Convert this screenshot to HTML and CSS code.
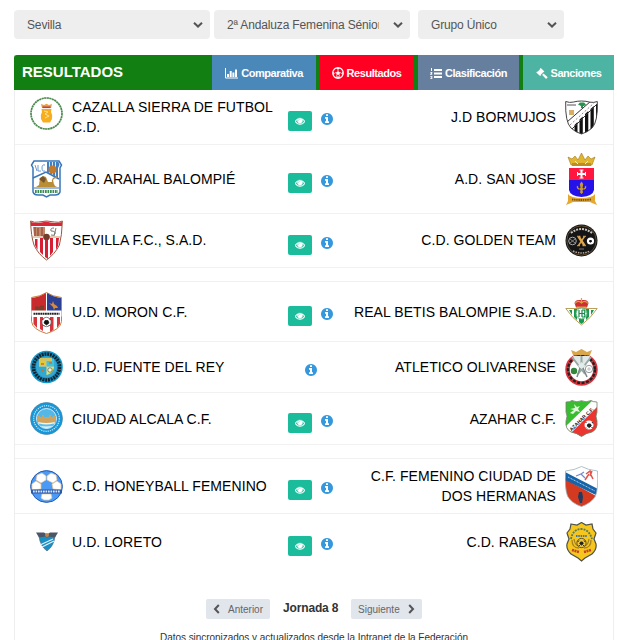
FILE: index.html
```
<!DOCTYPE html>
<html lang="es">
<head>
  <meta charset="UTF-8" />
  <title>Resultados</title>
  <meta name="viewport" content="width=device-width, initial-scale=1.0" />
  <link rel="stylesheet" href="styles.css">
</head>
<body>

<!-- shared icons -->
<svg class="defs" width="0" height="0">
  <symbol id="eye" viewBox="0 0 1792 1792"><path d="M1664 960q-152-236-381-353 61 104 61 225 0 185-131.500 316.500t-316.500 131.500-316.500-131.500-131.500-316.500q0-121 61-225-229 117-381 353 133 205 333.500 326.500t434.500 121.500 434.500-121.500 333.500-326.500zm-720-384q0-20-14-34t-34-14q-125 0-214.500 89.500t-89.500 214.500q0 20 14 34t34 14 34-14 14-34q0-86 61-147t147-61q20 0 34-14t14-34zm848 384q0 34-20 69-140 230-376.500 368.500t-499.500 138.500-499.500-139-376.500-368q-20-35-20-69t20-69q140-229 376.500-368t499.500-139 499.500 139 376.500 368q20 35 20 69z"/></symbol>
  <symbol id="info" viewBox="0 0 1792 1792"><path d="M1152 1376v-160q0-14-9-23t-23-9h-96v-512q0-14-9-23t-23-9h-320q-14 0-23 9t-9 23v160q0 14 9 23t23 9h96v320h-96q-14 0-23 9t-9 23v160q0 14 9 23t23 9h448q14 0 23-9t9-23zm-128-896v-160q0-14-9-23t-23-9h-192q-14 0-23 9t-9 23v160q0 14 9 23t23 9h192q14 0 23-9t9-23zm640 416q0 209-103 385.500t-279.500 279.500-385.500 103-385.500-103-279.500-279.500-103-385.500 103-385.500 279.500-279.500 385.500-103 385.500 103 279.500 279.500 103 385.500z"/></symbol>
  <symbol id="down" viewBox="0 0 10 8"><path d="M1 1.700l4 3.800 4-3.800" fill="none" stroke="#555" stroke-width="2"/></symbol>
</svg>

<div class="filters">
  <div class="select"><span>Sevilla</span><svg><use href="#down"/></svg></div>
  <div class="select"><span>2ª Andaluza Femenina Sénior</span><svg><use href="#down"/></svg></div>
  <div class="select short"><span>Grupo Único</span><svg><use href="#down"/></svg></div>
</div>

<div class="panel">
  <header>
    <h1>RESULTADOS</h1>
    <nav>
      <a class="tab blue">
        <svg width="13" height="11" viewBox="0 0 13 11"><path d="M.5 0v10H13" fill="none" stroke="#fff"/><path d="M2 6h2v3H2zM4.700 3h2v6h-2zM7.400 4.500h2V9h-2zM10 1.500h2V9h-2z" fill="#fff"/></svg>
        <span>Comparativa</span>
      </a>
      <a class="tab red">
        <svg width="12" height="12" viewBox="0 0 12 12"><circle cx="6" cy="6" r="5.300" fill="none" stroke="#fff" stroke-width="1.200"/><path d="M6 3.900l2 1.500-.7 2.300H4.700L4 5.400z" fill="#fff"/><path d="M3.600 1L6 2.400 8.400 1zM.8 4.300l1.600 2L1.700 9zM11.200 4.300l-1.600 2 .7 2.700zM4 11l.4-1.600h3.200L8 11z" fill="#fff"/><path d="M6 2v2M2.400 6.300L4 5.500M9.600 6.300L8 5.500M4.500 9.400l.4-1.700M7.500 9.400l-.4-1.700" stroke="#fff" stroke-width=".7"/></svg>
        <span>Resultados</span>
      </a>
      <a class="tab slate">
        <svg width="12" height="11" viewBox="0 0 12 11"><path d="M4 1h8v2H4zM4 4.500h8v2H4zM4 8h8v2H4zM1 0h1v3H1zM.3 4h2v1.200l-1 1.200h1V7H.3V6l1-1.200h-1zM.3 8h2v3h-2v-.7h1.200V10H.8v-.6h.7v-.7H.3z" fill="#fff"/></svg>
        <span>Clasificación</span>
      </a>
      <a class="tab teal">
        <svg width="12" height="11" viewBox="0 0 12 11"><path d="M4.800 0l3.600 3.500-.9.800-.3-.1L6 5.400l.9.800.7-.6 4.100 3.600-1.600 1.800-3.900-4 .5-.6-.7-.8L4.800 6.800l.1.400-.8.800L.3 4.400l.8-.8.500.1L4 1.200 3.900.8z" fill="#fff"/></svg>
        <span>Sanciones</span>
      </a>
    </nav>
  </header>

  <!-- Cazalla - Bormujos -->
  <div class="match h55">
    <svg class="crest up" width="33" height="33" viewBox="0 0 33 33">
      <circle cx="16.500" cy="16.500" r="15.500" fill="#fff" stroke="#4a8a4d" stroke-width="1.700" stroke-dasharray="2.200 .4"/>
      <path d="M11 7l3 1 2.500-1.300L19 8l3-1-1 4h-9z" fill="#e8a33c"/><path d="M12.500 9.500h8v1.600h-8z" fill="#c33a52"/>
      <path d="M11.500 12h10l-.5 3q2 3 1 7l-2 3.500h-7L11 22q-1-4 1-7z" fill="#f6ae1e"/><path d="M14 14l4 1-3 2 4 2-4 2" fill="none" stroke="#fbe49a"/>
    </svg>
    <div class="name">CAZALLA SIERRA DE FUTBOL C.D.</div>
    <div class="actions"><a class="view"><svg><use href="#eye"/></svg></a><svg class="info"><use href="#info"/></svg></div>
    <div class="name away">J.D BORMUJOS</div>
    <svg class="crest" width="33" height="35" viewBox="0 0 33 35">
      <clipPath id="bor"><path d="M.7 1.500q4 1.500 7.500.6Q12 1 16.500 1t8.500 1.200q4 .7 7.300-.7Q33 22 27 28q-4 4-10.500 6Q10 32 6 28 0 22 .7 1.500z"/></clipPath>
      <g clip-path="url(#bor)"><path d="M0 0h33v35H0z" fill="#fff"/><path d="M9.500 25l3-3v13h-3zM14.500 19.500l3.300-3V35h-3.300zM20 14l3.300-3v24H20zM25.500 9l3.300-3v29h-3.300zM31 4h2v23h-2z" fill="#111"/><path d="M2 22L26 1M7 29L32 4" fill="none" stroke="#333"/><path d="M5 25L29 3" stroke="#888" stroke-dasharray="2 2"/><path d="M4 10h5v5H4z" fill="#d6ae66"/><path d="M2 5h9" stroke="#555"/><path d="M13 4.500l2-2h4l2 2-2 1.500h-1v2h-2V6z" fill="#26924e"/></g>
      <path d="M.7 1.500q4 1.500 7.500.6Q12 1 16.500 1t8.500 1.200q4 .7 7.300-.7Q33 22 27 28q-4 4-10.500 6Q10 32 6 28 0 22 .7 1.500z" fill="none" stroke="#444"/>
    </svg>
  </div>

  <!-- Arahal - San Jose -->
  <div class="match h69">
    <svg class="crest" width="33" height="38" viewBox="0 0 33 38">
      <path d="M4 1h25l2.500 4-1.500 3v24q-1 3-5 3h-5l-3.500 2-3.500-2H8q-4 0-5-3V8L1.500 5z" fill="#fff" stroke="#3976b8" stroke-width="1.500"/>
      <path d="M17 2h11.500l1 3-1.500 3v10l-11-6z" fill="#3e7fc5"/><path d="M19.500 2v11M22.500 2v13M25.500 2v14" stroke="#d8e8f7"/><circle cx="22.500" cy="9.500" r="4" fill="#c47a2c"/>
      <path d="M5 5l2 6M8 5v6h3M15 5q-3-1-3 3t3 3" stroke="#6a9bd1" fill="none"/><path d="M3 18l13-6 13 7" fill="none" stroke="#3976b8" stroke-width="1.500"/>
      <path d="M6 27l3-2 1-7q3-3 6-1l2 5h5l2 4 2 1H6z" fill="#b88d36"/><path d="M9 19l4-3 3 3-2 4z" fill="#77542a"/><path d="M23 23q-2-5 4-6" fill="none" stroke="#b88d36" stroke-width="1.300"/><path d="M4 28h25" stroke="#3976b8"/><path d="M5 31.500h23" stroke="#3d8c50" stroke-width="3" stroke-dasharray="1.700 .8"/>
    </svg>
    <div class="name">C.D. ARAHAL BALOMPIÉ</div>
    <div class="actions"><a class="view"><svg><use href="#eye"/></svg></a><svg class="info"><use href="#info"/></svg></div>
    <div class="name away">A.D. SAN JOSE</div>
    <svg class="crest" width="33" height="53" viewBox="0 0 33 53">
      <path d="M6 12L3 4l4 2 3-3 3 4 3.500-7L20 7l3-4 3 3 4-2-3 8z" fill="#e2b52e" stroke="#9f781a" stroke-width=".6"/><path d="M7 10h19v3H7z" fill="#bd8d24"/><path d="M10 8l3 3M23 8l-3 3" stroke="#fff1a0"/>
      <path d="M4 15h25v12H4z" fill="#ff173f"/><path d="M4 27h25v10q-1 6-12.500 7Q5 43 4 37z" fill="#2512e8"/>
      <path d="M16.500 17v8M12.500 21h8" stroke="#fff" stroke-width="2"/><path d="M14.500 17h4M14.500 25h4M12.500 19v4M20.500 19v4" stroke="#fff"/>
      <path d="M16.500 28.500l1.700 2.500-.7 4h1v2h-1l.5 2.500-1.500 1.500-1.500-1.500.5-2.500h-1v-2h1l-.7-4z" fill="#c9982f"/><path d="M14 36q-2-.5-1.500-3M19 36q2-.5 1.500-3" fill="none" stroke="#c9982f" stroke-width="1.300"/>
      <path d="M3 41q1 2 5 3 8.500 2 17 0 4-1 5-3v7l2 4-5-2-2-1H8l-2 1-5 2 2-4z" fill="#e4a92e"/><path d="M7 46.500q9 1 19 0" fill="none" stroke="#78521e" stroke-width="1.800" stroke-dasharray="1.500 .7"/>
    </svg>
  </div>

  <!-- Sevilla - Golden Team -->
  <div class="match h54 raise">
    <svg class="crest" width="33" height="41" viewBox="0 0 33 41">
      <path d="M.6 1q4 2 8 1l8-1 8 1q4 1 7.800-1-.5 15-3 24Q25 34 16.500 40 8 34 4 25 1 16 .6 1z" fill="#fff" stroke="#9b5740"/>
      <path d="M1 2q7 2 15-.5Q24 4 32 2v4H1z" fill="#d92637"/><path d="M3 7h12v9H4z" fill="#c18a66"/><path d="M5 7v9M8 8v8M12 7v9" stroke="#8e3632"/><path d="M24 8q-4 0-3 3 5 0 4 3-1 2-4 1M26 8l-2 8" fill="none" stroke="#777"/>
      <path d="M5 19h2.500v11L5 25zM10 18h3v17l-3-3zM15 19h3v20l-3-2zM20 18h3v14l-3 4zM26 18h3l-1 8-2 4z" fill="#d71e35"/><path d="M3 17h12M18 17h12" stroke="#bd9c6d"/><circle cx="16.500" cy="17" r="3.300" fill="#713e2b"/>
    </svg>
    <div class="name">SEVILLA F.C., S.A.D.</div>
    <div class="actions"><a class="view"><svg><use href="#eye"/></svg></a><svg class="info"><use href="#info"/></svg></div>
    <div class="name away">C.D. GOLDEN TEAM</div>
    <svg class="crest" width="33" height="33" viewBox="0 0 33 33">
      <circle cx="16.500" cy="16.500" r="16" fill="#151515"/><circle cx="16.500" cy="16.500" r="14.700" fill="none" stroke="#80643b" stroke-width=".7"/>
      <path d="M6 9q10-8 21 0" fill="none" stroke="#c9c4bd" stroke-width="2" stroke-dasharray="2 1"/><path d="M8 27q9 4 17 0" fill="none" stroke="#b9aaa0" stroke-width="1.500" stroke-dasharray="1.500 1"/>
      <circle cx="7.500" cy="17" r="3.800" fill="none" stroke="#aaa"/><path d="M5 15l5 4M10 15l-5 4" stroke="#aaa" stroke-width=".7"/><circle cx="25.500" cy="17" r="3.600" fill="#fff"/><path d="M24.500 16h2l.6 1.500-1.600 1.300-1.600-1.300z" fill="#111"/>
      <path d="M13.500 12.500l6 9" stroke="#dca54d" stroke-width="2.400"/><path d="M19.500 12.500l-6 9" stroke="#dca54d" stroke-width="1.400"/><path d="M12 12.300h3.500M18 12.300h3M12 21.700h3M17.500 21.700H21" stroke="#dca54d"/><path d="M14 25h5" stroke="#777"/>
    </svg>
  </div>

  <div class="spacer"></div>

  <!-- Moron - Betis -->
  <div class="match h60">
    <svg class="crest down" width="33" height="42" viewBox="0 0 33 42">
      <path d="M16.500.5q6 4 15 5v24q-1 8-15 12-14-4-15-12v-24q9-1 15-5z" fill="#fff" stroke="#c9823e"/>
      <path d="M2 6q8-1 14-5v18H2z" fill="#c92a2e"/><path d="M17 1q6 4 14 5v13H17z" fill="#2b3f93"/><path d="M5 15l2-1 2 1 2-2 3 1v5H5z" fill="#843c2a"/><path d="M19 11l3 1 1-3 1 3 3 2 1 2h-3l-1 2-1-3z" fill="#d58a3f"/>
      <path d="M3.500 25h3.500v11l-3.500-4zM10 25h3v14l-3-2zM20 25h3.500v13L20 40zM27 25h3v7l-3 4z" fill="#d6333e"/><path d="M1.500 18.500h30v6h-30z" fill="#fff"/><path d="M3.500 21.700h26" stroke="#222" stroke-width="2" stroke-dasharray="1.800 .5"/><circle cx="16.500" cy="30" r="4.700" fill="#fff" stroke="#555" stroke-width=".7"/><path d="M15 28.500h3l1 2.500-2.500 2-2.500-2zM12.500 28l1.500-1.500M19 26.500l1.500 1.500M13.500 33l1 1M18.500 34l1-1" fill="#111" stroke="#111" stroke-width=".7"/>
    </svg>
    <div class="name">U.D. MORON C.F.</div>
    <div class="actions"><a class="view"><svg><use href="#eye"/></svg></a><svg class="info"><use href="#info"/></svg></div>
    <div class="name away">REAL BETIS BALOMPIE S.A.D.</div>
    <svg class="crest" width="33" height="28" viewBox="0 0 33 28">
      <path d="M.8 10.500h31.400Q26 20 16.500 27 7 20 .8 10.500z" fill="#fff" stroke="#bba058"/>
      <path d="M4 12h3v5zM9 11h3v11l-3-3zM14 11h5v13l-2.500 2-2.500-2zM21 11h3v8l-3 3zM26 12h3l-3 5z" fill="#169a53"/>
      <circle cx="16.500" cy="15.500" r="5.500" fill="#fff" stroke="#57ac73"/><path d="M14 12v7M17 12v7M14 15.500h6M17 12h2q2 2 0 3.500 2 2 0 3.500h-2" fill="none" stroke="#168b4c" stroke-width="1.200"/>
      <path d="M11 9.500L9.500 5q1-3 4-3h6q3 0 4 3L22 9.500z" fill="#d02d36"/><path d="M10 5.500q3-4 6.500-.5 3.500-3.500 6.500.5M11.500 9h10M16.500 0v5" fill="none" stroke="#d7a83d" stroke-width="1.200"/>
    </svg>
  </div>

  <!-- Fuente del Rey - Olivarense -->
  <div class="match h51">
    <svg class="crest" width="33" height="34" viewBox="0 0 33 34">
      <circle cx="16.500" cy="17" r="16.300" fill="#1199cf"/><circle cx="16.500" cy="17" r="13" fill="none" stroke="#14242e" stroke-width="3.600" stroke-dasharray="2 .8"/><circle cx="16.500" cy="17" r="10.500" fill="#39a6d0"/>
      <path d="M9 9h7v7H9z" fill="#e3ca34"/><path d="M17 9h7v7h-7z" fill="#3cc5dc"/><path d="M9 17h7v8q-6-2-7-5z" fill="#2aabd2"/><path d="M17 17h7q0 5-7 8z" fill="#dde65b"/><path d="M10 8h12v3H10z" fill="#d8c25a"/><circle cx="20" cy="20" r="2.200" fill="#f1f1d9" stroke="#444" stroke-width=".6"/><path d="M16.500 9v16M9 16.500h15" stroke="#a6caa5" stroke-width=".8"/><path d="M11 14h3M11 20l3 1M19 13h3" stroke="#d66b2c" stroke-width="1.300"/>
    </svg>
    <div class="name">U.D. FUENTE DEL REY</div>
    <div class="actions solo"><svg class="info"><use href="#info"/></svg></div>
    <div class="name away">ATLETICO OLIVARENSE</div>
    <svg class="crest" width="33" height="37" viewBox="0 0 33 37">
      <circle cx="16.500" cy="20.500" r="14" fill="#fff" stroke="#d7353e" stroke-width="4.500"/><circle cx="16.500" cy="20.500" r="13.500" fill="none" stroke="#222" stroke-width="2.400" stroke-dasharray="3 1.500"/>
      <path d="M8 7h17l-1 5-7 6-8-6z" fill="#dfe8e7"/><path d="M8 6L6 1l5 2 5.500-3L22 3l5-2-2 5z" fill="#d9a64a"/>
      <path d="M7 8l13 17M26 8L13 25M16.500 7v8" stroke="#9aa8a4" stroke-width="2"/><path d="M15 19l-3 9M18 19l4 9" stroke="#7c8987" stroke-width="1.500"/><path d="M13 17l3.500-4 4 4-4 3z" fill="#e2eceb"/><circle cx="9" cy="22" r="3.200" fill="#31863c"/><circle cx="24" cy="20" r="3.700" fill="#fff" stroke="#999"/><path d="M22 20h4M24 18v4" stroke="#aaa" stroke-width=".7"/>
    </svg>
  </div>

  <!-- Alcala - Azahar -->
  <div class="match h52">
    <svg class="crest" width="33" height="33" viewBox="0 0 33 33">
      <circle cx="16.500" cy="16.500" r="16" fill="#1598db" stroke="#537c97" stroke-width=".7"/><circle cx="16.500" cy="16.500" r="12.800" fill="none" stroke="#bfe4f7" stroke-width="1.300" stroke-dasharray="1.200 1"/><circle cx="16.500" cy="16.500" r="10" fill="#55b7e5" stroke="#fff" stroke-width=".8"/>
      <path d="M7 14h3v1h2v-2h2v2h5v-2h2v2h2v-1h3v7H7z" fill="#d1a45d"/><path d="M8 20q8 2 17 0l-1 2q-3 4-7.500 4T9 22z" fill="#e9f5fb"/><path d="M9 22.500q7 2 15 0" stroke="#5ebeea" stroke-width="2" fill="none"/>
    </svg>
    <div class="name">CIUDAD ALCALA C.F.</div>
    <div class="actions"><a class="view"><svg><use href="#eye"/></svg></a><svg class="info"><use href="#info"/></svg></div>
    <div class="name away">AZAHAR C.F.</div>
    <svg class="crest" width="33" height="37" viewBox="0 0 33 37">
      <clipPath id="aza"><path d="M1 2q4 0 6-1.500Q12 3 16.500.7 21 3 26 .5 28 2 32 2v10q-2 4 0 9 1 8-5 11-6 1-10.500 4.500Q12 33 6 32q-6-3-5-11 2-5 0-9z"/></clipPath>
      <g clip-path="url(#aza)"><path d="M0 0h33v37H0z" fill="#37bd2f"/><path d="M33 4v33H0v-2z" fill="#ec352f"/><path d="M-1 28L29-1l6 5L5 34z" fill="#fff"/></g>
      <path d="M1 2q4 0 6-1.500Q12 3 16.500.7 21 3 26 .5 28 2 32 2v10q-2 4 0 9 1 8-5 11-6 1-10.500 4.500Q12 33 6 32q-6-3-5-11 2-5 0-9z" fill="none" stroke="#76806e" stroke-width=".8"/>
      <path d="M5 13l4-3-4-1 5-1-1-4 3 3 3-1-2 3 2 3-4-1-3 3z" fill="#e4f5de"/><circle cx="24" cy="25" r="4.500" fill="#fff"/><path d="M23 24h2.500l.7 2-2 1.500-2-1.500zM20.500 23l1-1M27 22l1 1.500M21 27.500l1 1M26.500 28l1-1" fill="#222" stroke="#222"/>
      <text x="0" y="0" transform="translate(6.500 31.500) rotate(-44)" class="sash">AZAHAR C.F.</text>
    </svg>
  </div>

  <div class="spacer"></div>

  <!-- Honeyball - Ciudad de Dos Hermanas -->
  <div class="match h55">
    <svg class="crest" width="33" height="33" viewBox="0 0 33 33">
      <circle cx="16.500" cy="16.500" r="15.900" fill="#4b9af5" stroke="#245bb2"/>
      <path d="M7 5l5-2 4 3v4l-5 3-5-3zM17 6l4-3 5 2 1 5-4 3-6-3zM2 14l4-3 5 3v5l-9 1zM22 14l5-3 4 3v6l-8-1zM12 24h9l1 4-3 2h-5l-3-2z" fill="#fff" stroke="#e5c49a" stroke-width=".7"/>
      <path d="M1 19.500h31v4H1z" fill="#285bad"/><path d="M3 21.500h27" stroke="#dce9ff" stroke-width="2" stroke-dasharray="1.700 .8"/>
    </svg>
    <div class="name">C.D. HONEYBALL FEMENINO</div>
    <div class="actions"><a class="view"><svg><use href="#eye"/></svg></a><svg class="info"><use href="#info"/></svg></div>
    <div class="name away">C.F. FEMENINO CIUDAD DE DOS HERMANAS</div>
    <svg class="crest" width="33" height="41" viewBox="0 0 33 41">
      <clipPath id="her"><path d="M.5 5Q10 4 16.500.5 23 4 32.500 5q1 17-2 25-4 7-14 10.500Q6 37 2.500 30-.5 22 .5 5z"/></clipPath>
      <g clip-path="url(#her)"><path d="M0 0h33v41H0z" fill="#fff"/><path d="M0 13l33 18v10H0z" fill="#d43a20"/><path d="M0 6l33 17v7L0 14z" fill="#1763a8"/><path d="M3 11l27 14" stroke="#bcd8ee" stroke-dasharray="1 .7"/></g>
      <path d="M.5 5Q10 4 16.500.5 23 4 32.500 5q1 17-2 25-4 7-14 10.500Q6 37 2.500 30-.5 22 .5 5z" fill="none" stroke="#9bb1bd" stroke-width=".8"/>
      <path d="M11 10l5-2 4 4M16 8l3-2" fill="none" stroke="#748bd1" stroke-width="1.300"/><path d="M21 8l4-3 1 4 2 4M24 8l-4 6M25 10l2-5" fill="none" stroke="#df534a" stroke-width="1.500"/><path d="M14 26h3l1 5-1 6h-2l-2-6z" fill="#233b5e"/>
    </svg>
  </div>

  <!-- Loreto - Rabesa -->
  <div class="match last">
    <svg class="crest" width="22" height="20" viewBox="0 0 22 20">
      <path d="M3 4h16q-1 10-8 15Q4 14 3 4z" fill="#188fc5" stroke="#55606b" stroke-width=".6"/><path d="M0 .5h8l3 2 3-2h8l-3 5-6-1-2 1-2-1-6 1z" fill="#4c5669"/><circle cx="11" cy="3" r="2" fill="#bf864d"/><path d="M4 13l13-6M6 15l12-6" stroke="#e3f1f5" stroke-width="1.300"/>
    </svg>
    <div class="name">U.D. LORETO</div>
    <div class="actions"><a class="view"><svg><use href="#eye"/></svg></a><svg class="info"><use href="#info"/></svg></div>
    <div class="name away">C.D. RABESA</div>
    <svg class="crest" width="33" height="40" viewBox="0 0 33 40">
      <path d="M6 2l6 1 4.500-2.500L21 3l6-1 1 5 3 4-2 6 2 5q1 5-4 10l-7 4-3.500 3-3.500-3-7-4q-5-5-4-10l2-5-2-6 3-4z" fill="#f7c61d" stroke="#4c514a" stroke-width="1.200"/>
      <path d="M6 17q2-10 10-10t11 10" fill="none" stroke="#527b64" stroke-width="1.800" stroke-dasharray="2 1"/><path d="M11 14h11" stroke="#3f75a5" stroke-width="1.800" stroke-dasharray="1.500 .8"/>
      <path d="M7 18q0 8 7 8M26 18q0 8-7 8M9 17q1 6 4 7M24 17q-1 6-4 7" fill="none" stroke="#a78220" stroke-width="1.300"/><circle cx="16.500" cy="21" r="4.600" fill="#f0c83c" stroke="#333" stroke-width=".8"/><path d="M15.500 20h2l.7 1.700-1.700 1.300-1.700-1.300zM12.700 20l1.300-1.500M19 18.500l1.300 1.500M14 24l.7-1M19 24l-.7-1" fill="#222" stroke="#222"/><path d="M7 28l7 2M19 30l7-2" stroke="#c33e2b" stroke-width="2.500" stroke-dasharray="2 .6"/>
    </svg>
  </div>

  <div class="pager">
    <a class="page"><svg width="7" height="10" viewBox="0 0 7 10"><path d="M5.800 1L2 5l3.800 4" fill="none" stroke="#555" stroke-width="2"/></svg><span>Anterior</span></a>
    <strong>Jornada 8</strong>
    <a class="page next"><span>Siguiente</span><svg width="7" height="10" viewBox="0 0 7 10"><path d="M1.200 1L5 5 1.200 9" fill="none" stroke="#555" stroke-width="2"/></svg></a>
  </div>
  <p class="note">Datos sincronizados y actualizados desde la Intranet de la Federación</p>
</div>

</body>
</html>
```
FILE: styles.css
```
* {
  box-sizing: border-box;
}

body {
  margin: 0;
  padding: 10px 3px 0 14px;
  height: 640px;
  overflow: hidden;
  background: #fff;
  color: #000;
  font-family: "Liberation Sans", Arial, sans-serif;
}

svg {
  display: block;
  flex: none;
}

.defs {
  position: absolute;
}

.filters {
  display: flex;
  gap: 4px;
  margin-bottom: 16px;
}

.select {
  width: 196px;
  height: 29px;
  padding: 0 7px 0 13px;
  display: flex;
  align-items: center;
  justify-content: space-between;
  background: #eee;
  border-radius: 4px;
  color: #555;
  font-size: 12px;
  letter-spacing: -0.15px;
}

.select span {
  width: 152px;
  overflow: hidden;
  white-space: nowrap;
}

.select svg {
  width: 10px;
  height: 8px;
}

.short {
  width: 146px;
  margin-left: 4px;
}

.short span {
  width: 110px;
}

.panel {
  height: 585px;
  border: 1px solid #eee;
  border-width: 0 1px;
}

header {
  height: 35px;
  margin: 0 -1px;
  padding-left: 8px;
  display: flex;
  justify-content: space-between;
  align-items: center;
  background: #127f12;
  border-top-left-radius: 3px;
}

h1 {
  margin: 0;
  color: #fff;
  font-size: 15px;
  line-height: 33px;
  height: 35px;
}

nav {
  display: flex;
}

.tab {
  height: 35px;
  padding-top: 1px;
  display: flex;
  align-items: center;
  justify-content: center;
  gap: 3px;
  color: #fff;
  font-size: 11px;
  font-weight: bold;
  letter-spacing: -0.45px;
}

.blue {
  width: 104px;
  background: #4b88ba;
}

.red {
  width: 95px;
  margin-left: 3px;
  background: #ff0022;
}

.slate {
  width: 101px;
  margin-left: 4px;
  background: #677f9f;
}

.teal {
  width: 91px;
  margin-left: 4px;
  background: #4db3a2;
}

.match {
  padding: 0 15px;
  display: grid;
  grid-template-columns: 33px 204px 52px 1fr 33px;
  column-gap: 9px;
  align-items: center;
  justify-items: center;
  border-bottom: 1px solid #f1f1f1;
}

.h51 { height: 51px; }
.h52 { height: 52px; }
.h54 { height: 54px; }
.h55 { height: 55px; }
.h60 { height: 60px; }
.h69 { height: 69px; }

.last {
  height: 55px;
  border-bottom: 0;
}

.spacer {
  height: 14px;
  border-bottom: 1px solid #f1f1f1;
}

.up {
  margin-bottom: 7px;
}

.down {
  margin-top: 3px;
}

.name {
  justify-self: stretch;
  font-size: 14px;
  line-height: 20px;
  letter-spacing: 0.07px;
}

.raise .name {
  margin-bottom: 2px;
}

.away {
  text-align: right;
}

.actions {
  display: flex;
  align-items: center;
  gap: 8px;
}

.view {
  width: 24px;
  height: 20px;
  margin-top: 8px;
  display: flex;
  align-items: center;
  justify-content: center;
  background: #1abc9c;
  border-radius: 2px;
  fill: #fff;
  stroke: #fff;
  stroke-width: 70;
}

.view svg {
  width: 10px;
  height: 10px;
  overflow: visible;
}

.info {
  width: 14px;
  height: 14px;
  margin-top: 4px;
  fill: #3598dc;
}

.solo .info {
  margin-top: 6px;
}

.sash {
  font: bold 5px "Liberation Sans", sans-serif;
  fill: #222;
}

.pager {
  margin-top: 30px;
  display: flex;
  justify-content: center;
  align-items: center;
  gap: 13px;
  color: #333;
}

.pager strong {
  width: 55px;
  font-size: 12px;
  letter-spacing: -0.15px;
  line-height: 18px;
  padding-bottom: 2px;
  white-space: nowrap;
}

.page {
  width: 64px;
  height: 20px;
  padding: 0 7px;
  display: flex;
  align-items: center;
  justify-content: space-between;
  background: #e1e5ec;
  border-radius: 2px;
  color: #666;
  font-size: 10px;
}

.next {
  width: 71px;
}

.note {
  margin: 13px 0 0;
  text-align: center;
  color: #333;
  font-size: 10px;
  line-height: 12px;
  letter-spacing: -0.04px;
  white-space: nowrap;
}
```
